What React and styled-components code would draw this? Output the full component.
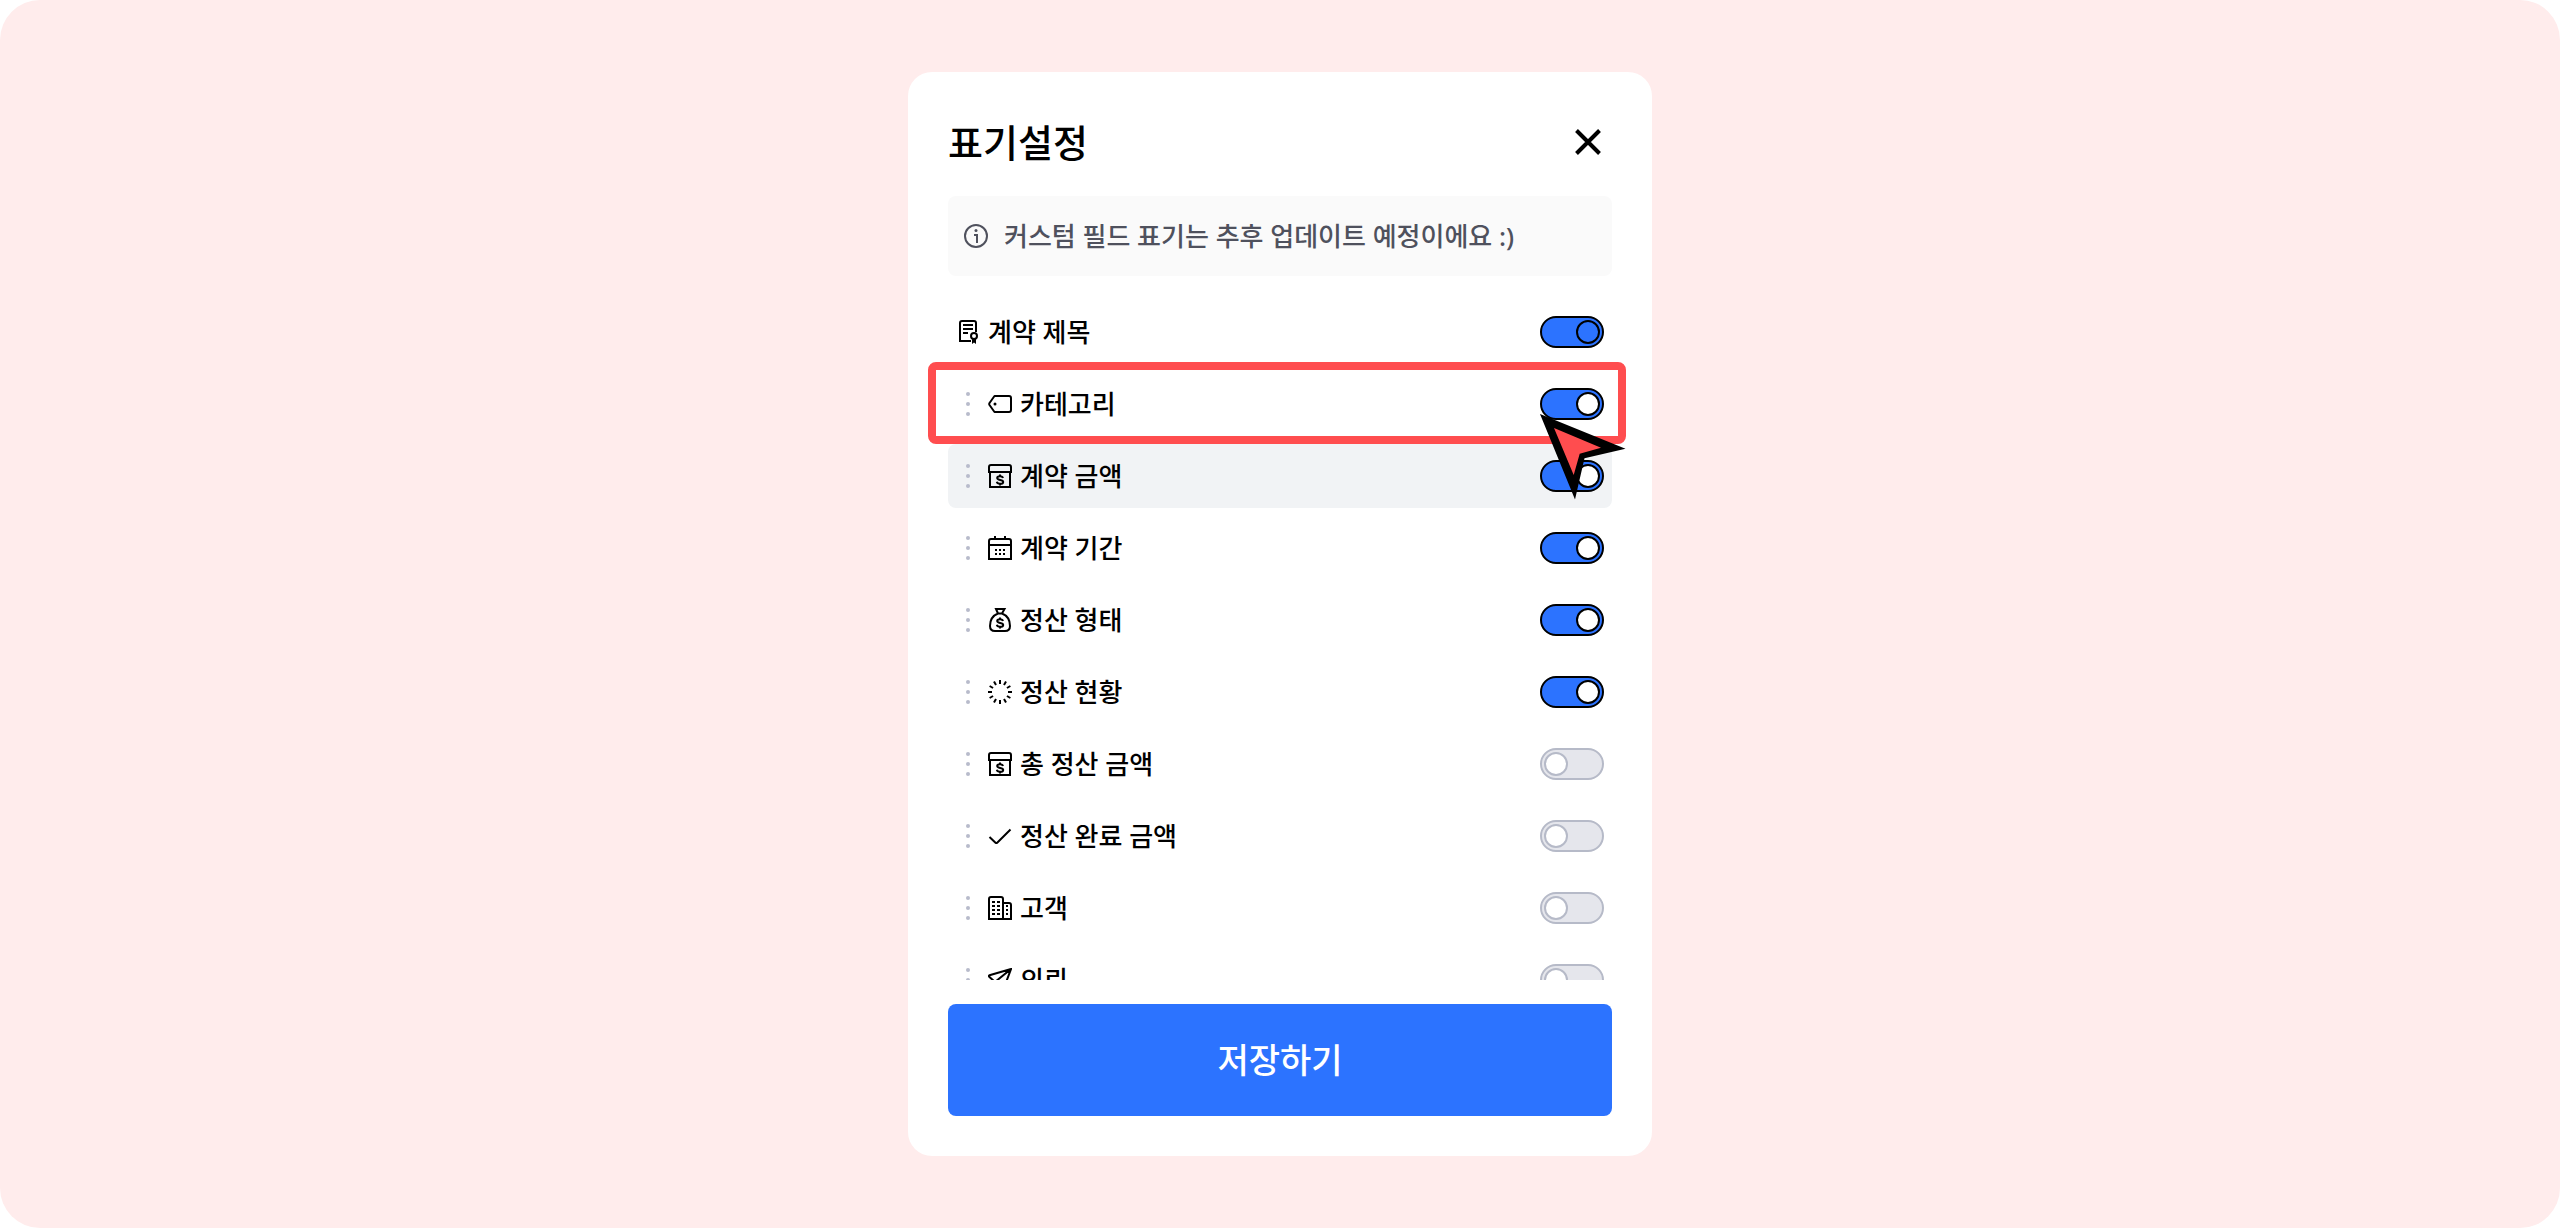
import React from "react";
import styled, { createGlobalStyle } from "styled-components";

const GlobalStyle = createGlobalStyle`
    *, *::after {
        box-sizing: border-box;
    }
    body {
        margin: 0;
        background-color: #ffffff;
        color: #000000;
        font-family: 'Noto Sans', 'Noto Sans CJK KR', sans-serif;
    }
`
const Page = styled.main`
    display: flex;
    justify-content: center;
    height: 100vh;
    padding: 72px;
    border-radius: 40px;
    background-color: #ffecec;
`
const Card = styled.form`
    display: flex;
    flex-direction: column;
    gap: 24px;
    width: 100%;
    max-width: 744px;
    padding: 40px;
    border-radius: 24px;
    background-color: #ffffff;
`
const Header = styled.header`
    display: flex;
    align-items: center;
    justify-content: space-between;
    height: 60px;
`
const Title = styled.h1`
    margin: 0;
    font-size: 38px;
    font-weight: 500;
    line-height: 60px;
`
const CloseButton = styled.button`
    display: flex;
    align-items: center;
    justify-content: center;
    width: 48px;
    height: 48px;
    padding: 0;
    border: none;
    background: none;
    color: inherit;
    cursor: pointer;
`
const Notice = styled.div`
    display: flex;
    align-items: center;
    gap: 16px;
    flex: none;
    height: 80px;
    padding: 0 16px;
    border-radius: 8px;
    background-color: #fafafa;
    color: #4f515d;
`
const NoticeText = styled.p`
    margin: 0;
    font-size: 26px;
    font-weight: 500;
    line-height: 40px;
`
const List = styled.ul`
    display: flex;
    flex-direction: column;
    gap: 8px;
    flex: 1;
    min-height: 0;
    margin: 0;
    padding: 0;
    list-style: none;
    overflow-x: visible;
    overflow-y: clip;
`
const Row = styled.li`
    position: relative;
    display: flex;
    align-items: center;
    gap: 8px;
    flex: none;
    height: 64px;
    padding: 0 8px;
    border-radius: 8px;
    background-color: ${props => props.$hovered ? "#f1f3f5" : "transparent"};
    z-index: ${props => props.$picked ? 1 : 0};
`
const Label = styled.label`
    flex: 1;
    font-size: 26px;
    font-weight: 500;
    line-height: 40px;
`
const Switch = styled.input`
    appearance: none;
    width: 64px;
    height: 32px;
    margin: 0;
    padding: 2px;
    border: 2px solid #b6bac8;
    border-radius: 16px;
    background-color: #e5e6ec;
    cursor: pointer;

    &::after {
        content: "";
        display: block;
        width: 24px;
        height: 24px;
        border: 2px solid #b6bac8;
        border-radius: 50%;
        background-color: #ffffff;
    }
    &:checked {
        border-color: #000000;
        background-color: #2c73ff;
    }
    &:checked::after {
        margin-left: auto;
        border-color: #000000;
    }
    &:disabled::after {
        background-color: #2c73ff;
    }
`
const Highlight = styled.div`
    position: absolute;
    top: -10px;
    right: -14px;
    bottom: -8px;
    left: -20px;
    border: 8px solid #ff4d4f;
    border-radius: 8px;
    pointer-events: none;
`
const Pointer = styled.svg`
    position: absolute;
    top: 40px;
    right: -16px;
    pointer-events: none;
`
const SaveButton = styled.button`
    flex: none;
    height: 112px;
    border: none;
    border-radius: 8px;
    background-color: #2c73ff;
    color: #ffffff;
    font-family: inherit;
    font-size: 34px;
    font-weight: 500;
    line-height: 60px;
    cursor: pointer;
`
const Svg = styled.svg`
    flex: none;
    fill: none;
    stroke: currentColor;
    stroke-width: 2;
`

function Icon({ children }) {
    return <Svg width="24" height="24" viewBox="0 0 24 24" aria-hidden="true">{children}</Svg>
}

const dollar = "M15 4C14.700 2.800 13.600 2.200 12 2.200c-1.800 0-2.800.7-2.800 1.800 0 2.700 6 1.200 6 3.900 0 1.200-1.200 1.900-3.200 1.900-1.700 0-2.900-.7-3.200-2M12 .5v1.800M12 9.700v1.800"

const icons = {
    document: (
        <Icon>
            <path d="M15 21H4V3a2 2 0 0 1 2-2h12a2 2 0 0 1 2 2v9M7 5h10M7 9h10M7 13h5" />
            <circle cx="18" cy="16" r="3" />
            <path d="M16 18v6l2-1.500 2 1.500v-6l-2 1z" fill="currentColor" stroke="none" />
        </Icon>
    ),
    tag: (
        <Icon>
            <path d="M6.500 4H21a2 2 0 0 1 2 2v12a2 2 0 0 1-2 2H6.500L1.500 13a2 2 0 0 1 0-2z" strokeLinejoin="round" />
            <circle cx="7" cy="12" r="1.500" fill="currentColor" stroke="none" />
        </Icon>
    ),
    box: (
        <Icon>
            <path d="M1 8V3a2 2 0 0 1 2-2h18a2 2 0 0 1 2 2v5zM2 8v15h20V8" />
            <path d={dollar} transform="translate(0 10)" />
        </Icon>
    ),
    calendar: (
        <Icon>
            <path d="M1 23V5a2 2 0 0 1 2-2h18a2 2 0 0 1 2 2v18zM1 9h22M7 0v3M17 0v3" />
            <path d="M7 14h2M11 14h2M15 14h2M7 18h2M11 18h2M15 18h2" />
        </Icon>
    ),
    bag: (
        <Icon>
            <path d="M10 5.500L8 1h8.500L14 5.500zM10 5.500C5 7.500 2 12.500 2 18c0 3.500 1.500 5 5 5h10c3.500 0 5-1.500 5-5 0-5.500-3-10.500-8-12.500" />
            <path d={dollar} transform="translate(0 9)" />
        </Icon>
    ),
    loader: (
        <Icon>
            {Array.from({ length: 12 }, (_, i) => (
                <path key={i} d="M12 0v4" transform={`rotate(${i * 30} 12 12)`} />
            ))}
        </Icon>
    ),
    check: (
        <Icon>
            <path d="M1.500 13l6 5.700a1.300 1.300 0 0 0 1.700 0L22.500 5.500" />
        </Icon>
    ),
    building: (
        <Icon>
            <path d="M1 23V3a2 2 0 0 1 2-2h10a2 2 0 0 1 2 2v20zM15 7h6a2 2 0 0 1 2 2v14h-8" />
            <path d="M4 6h3M9 6h3M4 10h3M9 10h3M4 14h3M9 14h3M4 18h3M9 18h3M18 10h2M18 14h2M18 18h2" />
        </Icon>
    ),
    send: (
        <Icon>
            <path d="M23 1L1.500 7.200c-.8.3-.9 1-.3 1.600L7 14v7l4-3 4 4.500L23 1L7 14" />
        </Icon>
    ),
}

const Grip = () => (
    <Svg width="24" height="24" viewBox="0 0 24 24" aria-hidden="true">
        <g fill="#b8bbcb" stroke="none">
            <circle cx="12" cy="2" r="2" />
            <circle cx="12" cy="12" r="2" />
            <circle cx="12" cy="22" r="2" />
        </g>
    </Svg>
)

const fields = [
    { id: "title", name: "계약 제목", icon: "document", on: true, fixed: true },
    { id: "category", name: "카테고리", icon: "tag", on: true, picked: true },
    { id: "amount", name: "계약 금액", icon: "box", on: true, hovered: true },
    { id: "period", name: "계약 기간", icon: "calendar", on: true },
    { id: "type", name: "정산 형태", icon: "bag", on: true },
    { id: "status", name: "정산 현황", icon: "loader", on: true },
    { id: "total", name: "총 정산 금액", icon: "box" },
    { id: "settled", name: "정산 완료 금액", icon: "check" },
    { id: "client", name: "고객", icon: "building" },
    { id: "request", name: "의뢰", icon: "send" },
]

export default function App() {
    return (
        <Page>
            <GlobalStyle />
            <Card onSubmit={e => e.preventDefault()}>
                <Header>
                    <Title>표기설정</Title>
                    <CloseButton type="button" aria-label="닫기">
                        <svg width="26" height="26" viewBox="0 0 26 26" stroke="currentColor" strokeWidth="4">
                            <path d="M1.500 1.500l23 23M24.500 1.500l-23 23" />
                        </svg>
                    </CloseButton>
                </Header>
                <Notice>
                    <Icon>
                        <circle cx="12" cy="12" r="11" />
                        <circle cx="12" cy="6.500" r="1.500" fill="currentColor" stroke="none" />
                        <path d="M10 11h3v8" />
                    </Icon>
                    <NoticeText>커스텀 필드 표기는 추후 업데이트 예정이에요 :)</NoticeText>
                </Notice>
                <List>
                    {fields.map(field => (
                        <Row key={field.id} $hovered={field.hovered} $picked={field.picked}>
                            {!field.fixed && <Grip />}
                            {icons[field.icon]}
                            <Label htmlFor={field.id}>{field.name}</Label>
                            <Switch
                                type="checkbox"
                                id={field.id}
                                defaultChecked={field.on}
                                disabled={field.fixed}
                            />
                            {field.picked && (
                                <>
                                    <Highlight />
                                    <Pointer width="88" height="88" viewBox="0 0 88 88" aria-hidden="true">
                                        <path d="M0 2l85.500 34.700-41 9.500L35 87.500z" />
                                        <path d="M14 16l47 19.700-21.300 6-6 21.300z" fill="#ff4d4f" />
                                    </Pointer>
                                </>
                            )}
                        </Row>
                    ))}
                </List>
                <SaveButton type="submit">저장하기</SaveButton>
            </Card>
        </Page>
    )
}
